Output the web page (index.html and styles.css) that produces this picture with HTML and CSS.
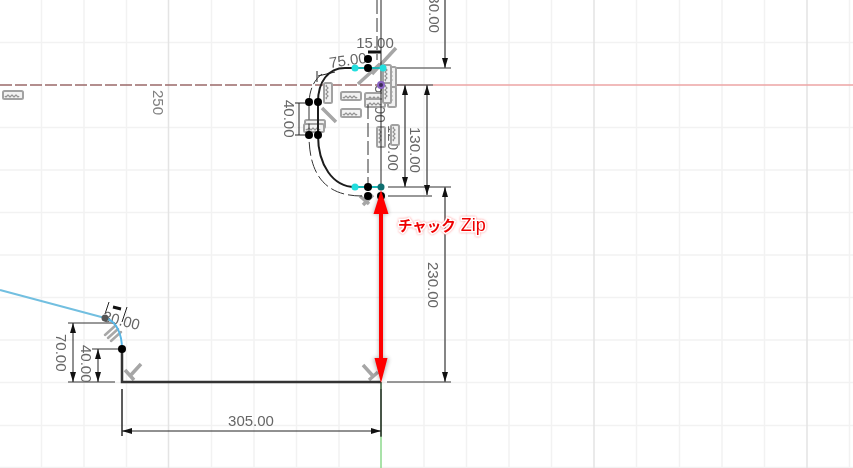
FILE: index.html
```html
<!DOCTYPE html>
<html lang="ja">
<head>
<meta charset="utf-8">
<title>Sketch</title>
<link rel="stylesheet" href="styles.css">
</head>
<body>
<svg class="canvas" width="853" height="468" viewBox="0 0 853 468" xmlns="http://www.w3.org/2000/svg">
  <defs>
    <symbol id="comb" viewBox="0 0 22 10" width="22" height="10">
      <rect class="glyph" x="1" y="1" width="20" height="8" rx="1.5"/>
      <path class="glyph-thin" d="M3 6q1 2 2 0t2 0 2 0 2 0 2 0 2 0 2 0"/>
    </symbol>
    <marker id="arr" viewBox="0 0 10 6" refX="10" refY="3" markerWidth="10" markerHeight="6" orient="auto-start-reverse" markerUnits="userSpaceOnUse">
      <path class="head" d="M0 0 L10 3 L0 6 Z"/>
    </marker>
    <filter id="soft" x="-50%" y="-10%" width="200%" height="120%">
      <feGaussianBlur stdDeviation="2"/>
    </filter>
  </defs>

  <g class="grid">
    <path d="M41.500 0V468M84 0V468M126.500 0V468M211.500 0V468M254 0V468M296.500 0V468M339 0V468M424 0V468M466.500 0V468M509 0V468M551.500 0V468M636.500 0V468M679.500 0V468M722 0V468M764.500 0V468M849.500 0V468"/>
    <path d="M0 42.500H853M0 127.500H853M0 170H853M0 212.500H853M0 255H853M0 297.500H853M0 340H853M0 382.500H853M0 425.500H853M0 467.500H853"/>
  </g>
  <path class="grid-major" d="M168.500 0V468M594 0V468M807 0V468"/>

  <path class="axis-red" d="M381 85H853"/>
  <path class="axis-red-dark" d="M0 85H381"/>
  <path class="axis-green" d="M381 382V468"/>

  <g class="drawing">
    <g class="dims">
      <path class="ext" d="M395 68H451M388 85H433M388 187H451M388 196H432M387 382H451"/>
      <path class="ext" d="M68 382H115"/>
      <path class="ext-dark" d="M68 323H115M92 349H122M122 389V436M381 389V436"/>
      <path class="dim" marker-end="url(#arr)" d="M445 0V68"/>
      <path class="dim" marker-start="url(#arr)" marker-end="url(#arr)" d="M405 85V187"/>
      <path class="dim" marker-start="url(#arr)" marker-end="url(#arr)" d="M427 85V195"/>
      <path class="dim" marker-start="url(#arr)" marker-end="url(#arr)" d="M445 187V382"/>
      <path class="dim-dark" marker-start="url(#arr)" marker-end="url(#arr)" d="M73 323V382"/>
      <path class="dim-dark" marker-start="url(#arr)" marker-end="url(#arr)" d="M98 349V382"/>
      <path class="dim-dark" marker-start="url(#arr)" marker-end="url(#arr)" d="M122 431H381"/>
      <path class="dim-dark" d="M109 302L105 314M127 307L122 322"/>
      <path class="dim-bold" d="M113 307L121 309M368 52H381"/>
      <path class="dim-dark" d="M317 71V82M318 76L335 72M299 103V135M295 135H305M295 103H305"/>
    </g>

    <text class="label" x="251" y="426" text-anchor="middle">305.00</text>
    <text class="label" x="375" y="48" text-anchor="middle">15.00</text>
    <text class="label" transform="translate(330 68) rotate(-8)">75.00</text>
    <text class="label" transform="translate(428 262) rotate(90)">230.00</text>
    <text class="label" transform="translate(410 127) rotate(90)">130.00</text>
    <text class="label" transform="translate(388 125) rotate(90)">120.00</text>
    <text class="label" transform="translate(429 -13) rotate(90)">130.00</text>
    <text class="label" transform="translate(56 334) rotate(90)">70.00</text>
    <text class="label" transform="translate(81 345) rotate(90)">40.00</text>
    <text class="label" transform="translate(284 100) rotate(90)">40.00</text>
    <text class="label" transform="translate(375 85) rotate(90)">50.00</text>
    <text class="label" transform="translate(102 321) rotate(14)">30.00</text>
    <text class="label muted" transform="translate(153 90) rotate(90)">250</text>

    <g class="constraints">
      <use href="#comb" x="2" y="90"/>
      <use href="#comb" x="340" y="91"/>
      <use href="#comb" x="340" y="108"/>
      <use href="#comb" x="364" y="92"/>
      <use href="#comb" x="364" y="98"/>
      <use href="#comb" x="304" y="119"/>
      <use href="#comb" x="303" y="123"/>
      <use href="#comb" transform="translate(333 82) rotate(90)"/>
      <use href="#comb" transform="translate(386 126) rotate(90)"/>
      <use href="#comb" transform="translate(400 124) rotate(90)"/>
      <use href="#comb" transform="translate(397 66) rotate(90)"/>
      <use href="#comb" transform="translate(392 64) rotate(90)"/>
      <use href="#comb" transform="translate(397 86) rotate(90)"/>
      <use href="#comb" transform="translate(392 82) rotate(90)"/>
      <path class="stripe" d="M105 335L115 326M108 338L118 329M111 341L121 332"/>
      <path class="tee" d="M141 364L130 376M125 370L134 380"/>
      <path class="tee" d="M363 365L373 376M369 380L378 372"/>
      <path class="tee" d="M363 205L373 195M360 196L369 204"/>
      <path class="tee" d="M396 48L372 74M358 84L380 64M322 108L336 122"/>
    </g>

    <path class="dashed" d="M377 0V60M368 105V196M362 196C330 196 309 180 309 135V105C309 90 314 80 322 74"/>
    <path class="wire-thin" d="M381 0V187"/>
    <path class="sketch" d="M368 68H345C328 68 318 82 318 102V135C318 165 333 187 355 187H368"/>
    <path class="teal" d="M355 68H383M355 187H381"/>
    <path class="ref" d="M0 290L105 318"/>
    <path class="ref-curve" d="M105 318C117 321 122 335 122 349"/>
    <path class="profile" d="M122 349V382H381"/>
    <path class="wire-thin" d="M381 382V437M122 389V436"/>

    <g class="dots">
      <circle cx="368" cy="59" r="4"/><circle cx="368" cy="68" r="4"/>
      <circle cx="309" cy="102" r="4"/><circle cx="318" cy="102" r="4"/>
      <circle cx="309" cy="135" r="4"/><circle cx="318" cy="135" r="4"/>
      <circle cx="368" cy="187" r="4"/><circle cx="368" cy="196" r="4"/><circle cx="381" cy="196" r="4"/>
      <circle cx="122" cy="349" r="4"/>
    </g>
    <circle class="dot-gray" cx="105" cy="318" r="3.500"/>
    <circle class="dot-cyan" cx="355" cy="68" r="3.500"/>
    <circle class="dot-cyan" cx="383" cy="68" r="3.500"/>
    <circle class="dot-cyan" cx="355" cy="187" r="3.500"/>
    <circle class="dot-teal" cx="381" cy="187" r="3.500"/>
    <circle class="dot-purple" cx="381" cy="85" r="3"/>
  </g>

  <path class="arrow-shadow" filter="url(#soft)" d="M381 190L389 214H383V358H389L381 383L373 358H379V214H373Z"/>
  <path class="arrow" d="M381 190L388.500 214H383V358H387.500L381 383L374.500 358H379V214H373.500Z"/>
  <text class="note" x="398" y="231"><tspan class="note-jp">チャック</tspan> Zip</text>
</svg>
</body>
</html>
```
FILE: styles.css
```css
html, body {
  margin: 0;
  padding: 0;
  background: #ffffff;
  overflow: hidden;
}
.canvas {
  display: block;
  background: #ffffff;
}
.grid path { fill: none; stroke: #f2f2f2; stroke-width: 1.5; }
.grid-major { fill: none; stroke: #e4e4e4; stroke-width: 1.5; }
.axis-red { fill: none; stroke: #eda4a4; stroke-width: 1.5; }
.axis-red-dark { fill: none; stroke: #9a6a6a; stroke-width: 1.5; stroke-dasharray: 12 3; }
.axis-green { fill: none; stroke: #8cd98c; stroke-width: 1.5; }
.drawing { filter: blur(0.35px); }
.ext { fill: none; stroke: #777777; stroke-width: 1.5; }
.ext-dark { fill: none; stroke: #333333; stroke-width: 1; }
.dim { fill: none; stroke: #5c5c5c; stroke-width: 1.5; }
.dim-dark { fill: none; stroke: #222222; stroke-width: 1; }
.dim-bold { fill: none; stroke: #111111; stroke-width: 3; }
.head { fill: #111111; }
.label {
  font-family: "Liberation Sans", Arial, sans-serif;
  font-size: 15px;
  fill: #666666;
}
.muted { fill: #808080; }
.glyph { fill: #f2f2f2; stroke: #a2a2a2; stroke-width: 2; }
.glyph-thin { fill: none; stroke: #8c8c8c; stroke-width: 1.2; }
.tee { fill: none; stroke: #a6a6a6; stroke-width: 3.5; }
.stripe { fill: none; stroke: #a8a8a8; stroke-width: 2.500; stroke-linecap: round; }
.dashed { fill: none; stroke: #333333; stroke-width: 1; stroke-dasharray: 14 4; }
.wire-thin { fill: none; stroke: #222222; stroke-width: 1; }
.sketch { fill: none; stroke: #1c1c1c; stroke-width: 2; }
.teal { fill: none; stroke: #1fb5b5; stroke-width: 2; }
.ref { fill: none; stroke: #72bfe0; stroke-width: 2; }
.ref-curve { fill: none; stroke: #5ab7e6; stroke-width: 2; }
.profile { fill: none; stroke: #333333; stroke-width: 2.5; }
.dots circle { fill: #000000; }
.dot-gray { fill: #555555; }
.dot-cyan { fill: #22dede; }
.dot-teal { fill: #0f6f70; }
.dot-purple { fill: #3a2a55; stroke: #8a63c4; stroke-width: 2; }
.arrow { fill: #ff0000; }
.arrow-shadow { fill: #000000; opacity: 0.3; }
.note {
  font-family: "Liberation Sans", "Noto Sans CJK JP", sans-serif;
  font-size: 18px;
  fill: #ee0000;
  stroke: #ffffff;
  stroke-width: 3px;
  paint-order: stroke;
  filter: drop-shadow(0 0 1px rgba(255, 60, 60, 0.55));
}
.note-jp {
  font-size: 14.500px;
  font-weight: 700;
}
```
